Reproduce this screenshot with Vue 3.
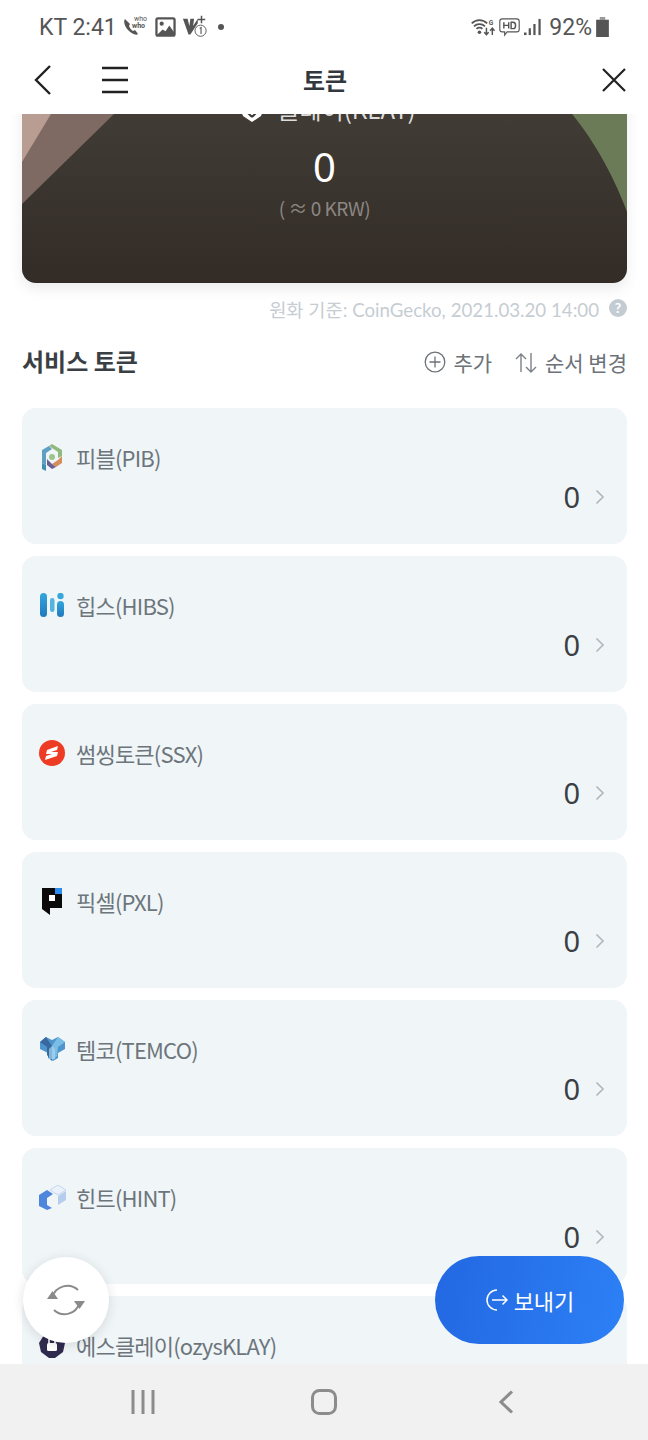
<template>
  <div class="screen">
    <div class="status">
      <div class="status-left">
        <span class="status-text">KT 2:41</span>
        <svg class="ic-who" width="26" height="24" viewBox="0 0 26 24">
          <path d="M2 4c-2 2 0 8 3 11s8 6 10 4l-3-4-2 1c-2-1-3-3-4-5l1-2z" fill="#555" />
          <text x="11" y="6" class="tiny">who</text>
          <text x="9" y="13" class="tiny bold">who</text>
        </svg>
        <svg width="21" height="20" viewBox="0 0 22 21">
          <rect x="1.500" y="1.500" width="19" height="18" rx="1.500" fill="none" stroke="#555" stroke-width="2.400" />
          <circle cx="7" cy="7" r="2.200" fill="#555" />
          <path d="M2 19l6-6 3 2 4-6 5 7v3z" fill="#555" />
        </svg>
        <svg width="26" height="26" viewBox="0 0 28 26">
          <path d="M1 4h5l2 8 1-8h4l-1 8 5-8v5l-8 12H7z" fill="#555" />
          <path d="M21 1v8M17 5h8" stroke="#555" stroke-width="1.600" />
          <circle cx="20" cy="17" r="6" fill="#fff" stroke="#555" stroke-width="1" />
          <path d="M19 14.500l1.500-1v7" fill="none" stroke="#555" stroke-width="1.200" />
        </svg>
        <span class="dot"></span>
      </div>
      <div class="status-right">
        <svg width="25" height="20" viewBox="0 0 34 26">
          <path d="M1 8c6-6 15-6 21 0M4 12c4-4 11-4 15 0M7.500 15.500c2-2 6-2 8 0" fill="none" stroke="#555" stroke-width="2.400" />
          <circle cx="11.500" cy="20" r="2.400" fill="#555" />
          <text x="24" y="10" class="tiny bold big">G</text>
          <path d="M21 14v9M18 20l3 3.500 3-3.500M29 24v-9M26 18l3-3.500 3 3.500" fill="none" stroke="#555" stroke-width="2" />
        </svg>
        <svg class="ic-hd" width="21" height="20" viewBox="0 0 26 24">
          <path d="M4 2h18a3 3 0 0 1 3 3v10a3 3 0 0 1-3 3H10l-3 4v-4H4a3 3 0 0 1-3-3V5a3 3 0 0 1 3-3z" fill="none" stroke="#555" stroke-width="1.400" />
          <path d="M6 6v8M12 6v8M6 10h6M15 6v8h2.500c4 0 4-8 0-8z" fill="none" stroke="#555" stroke-width="1.800" />
        </svg>
        <svg class="ic-signal" width="17" height="18" viewBox="0 0 20 21">
          <rect x="0" y="17" width="3" height="3" fill="#555" />
          <rect x="5.500" y="12" width="2.600" height="8" fill="#555" />
          <rect x="11" y="7" width="2.600" height="13" fill="#555" />
          <rect x="17" y="1" width="2.600" height="19" fill="#555" />
        </svg>
        <span class="status-text pct">92%</span>
        <svg width="13" height="20" viewBox="0 0 14 22">
          <rect x="4" y="0" width="6" height="3" fill="#999" />
          <rect x="0" y="3" width="14" height="19" fill="#555" />
        </svg>
      </div>
    </div>

    <header class="topbar">
      <div class="tb-left">
        <svg width="20" height="32" viewBox="0 0 20 32">
          <path d="M17 2L3 16l14 14" fill="none" stroke="#222" stroke-width="2.400" />
        </svg>
        <svg width="28" height="28" viewBox="0 0 28 28">
          <path d="M1 2h26M1 14h26M1 26h26" stroke="#222" stroke-width="2.400" />
        </svg>
      </div>
      <h1 class="title">토큰</h1>
      <div class="tb-right">
        <svg width="26" height="26" viewBox="0 0 26 26">
          <path d="M2 2l22 22M24 2L2 24" stroke="#222" stroke-width="2.200" />
        </svg>
      </div>
    </header>

    <main class="content">
      <section class="klay-card">
        <svg class="klay-bg" width="605" height="229" viewBox="0 0 605 229">
          <polygon points="0,0 160,0 92,60 0,150" fill="#7e6a62" />
          <polygon points="0,0 40,0 29,60 0,108" fill="#b99d93" />
          <path d="M550 60C575 90 595 130 605 158V60z" fill="#6b7a57" />
        </svg>
        <div class="klay-name">
          <svg class="klay-logo" width="26" height="24" viewBox="0 0 26 24">
            <path d="M13 0l13 8-4 10-9 6-9-6L0 8z" fill="#fff" />
            <path d="M8 0h10l-5 16z" fill="#3f3933" />
            <path d="M13 19L5 11M13 19l8-8" stroke="#3f3933" stroke-width="2" />
          </svg>
          <span>클레이(KLAY)</span>
        </div>
        <div class="klay-amount">0</div>
        <div class="klay-krw">( ≈ 0 KRW)</div>
      </section>

      <div class="rate">
        <span>원화 기준: CoinGecko, 2021.03.20 14:00</span>
        <span class="rate-help">?</span>
      </div>

      <div class="section-head">
        <h2>서비스 토큰</h2>
        <div class="actions">
          <span class="action">
            <svg width="22" height="22" viewBox="0 0 22 22">
              <circle cx="11" cy="11" r="9.800" fill="none" stroke="#6c7278" stroke-width="1.300" />
              <path d="M11 5.500v11M5.500 11h11" stroke="#6c7278" stroke-width="1.300" />
            </svg>
            추가
          </span>
          <span class="action">
            <svg width="24" height="24" viewBox="0 0 24 24">
              <path d="M7 22V4M2 9l5-5 5 5M17 3v19M12 17l5 5 5-5" fill="none" stroke="#7b8186" stroke-width="1.400" />
            </svg>
            순서 변경
          </span>
        </div>
      </div>

      <ul class="token-list">
        <li v-for="t in tokens" :key="t.id" class="token">
          <div class="token-name">
            <span class="token-icon">
              <svg v-if="t.id === 'pib'" width="22" height="27" viewBox="0 0 22 27">
                <path d="M11 0l10 6v6l-4 2V8l-6-4-3-2z" fill="#8fb97d" />
                <path d="M8 2L1 6v13l4 2V9l6-4z" fill="#5f9fc4" />
                <path d="M21 12v7l-6 4-4-3 6-4z" fill="#d58d5e" />
                <path d="M1 19l4 2v6l-4-2z" fill="#3f8fb5" />
                <path d="M6 15l5 5 4 3-4 2-5-4z" fill="#6a5f92" />
                <circle cx="11" cy="13" r="3" fill="#9cc48b" />
              </svg>
              <svg v-else-if="t.id === 'hibs'" width="24" height="24" viewBox="0 0 24 24">
                <defs>
                  <linearGradient id="hibsg" x1="0" y1="0" x2="0" y2="1">
                    <stop offset="0" stop-color="#35a7dd" />
                    <stop offset="1" stop-color="#1f78bd" />
                  </linearGradient>
                </defs>
                <rect x="0" y="0" width="7" height="24" rx="3.500" fill="url(#hibsg)" />
                <rect x="10" y="5" width="4.500" height="14" rx="2.200" fill="#56b3df" />
                <circle cx="20.500" cy="3" r="3.200" fill="#35a7dd" />
                <rect x="17" y="8" width="7" height="16" rx="3.500" fill="url(#hibsg)" />
              </svg>
              <svg v-else-if="t.id === 'ssx'" width="26" height="26" viewBox="0 0 26 26">
                <circle cx="13" cy="13" r="13" fill="#ee3b24" />
                <path d="M8 10l11-4-1 4-6 2 7 0-1 4-12 4 1-4 6-2-6 0z" fill="#fff" />
              </svg>
              <svg v-else-if="t.id === 'pxl'" width="20" height="27" viewBox="0 0 20 27">
                <path d="M0 0h20v20H8v7l-8-6z" fill="#0a0a0a" />
                <rect x="13" y="0" width="7" height="6" fill="#2b8cf0" />
                <rect x="7" y="7" width="6" height="6" fill="#fff" />
              </svg>
              <svg v-else-if="t.id === 'temco'" width="25" height="24" viewBox="0 0 25 24">
                <path d="M0 5l6-5 6 3 6-3 7 5v7l-7 4v5l-5 3-5-3v-5l-8-4z" fill="#4f95cc" />
                <path d="M0 5l7 5v8l5 6V9L6 0z" fill="#37689f" />
                <path d="M12 9l6-9 7 5-7 5-1 9-5 5z" fill="#79bde6" />
                <path d="M9 12l3-3 3 3v10h-6z" fill="#a5d4ee" opacity="0.7" />
              </svg>
              <svg v-else-if="t.id === 'hint'" width="27" height="25" viewBox="0 0 27 25">
                <path d="M0 10l8-5 6 4-6 4v7l5 3-5 2-8-4z" fill="#4f86dd" />
                <path d="M11 5l8-5 8 5-8 5z" fill="#eaf2fb" stroke="#c4d6ee" stroke-width="1" />
                <path d="M27 6v9l-8 5v-9z" fill="#b6cdee" />
              </svg>
              <svg v-else width="26" height="26" viewBox="0 0 26 26">
                <path d="M13 0l8 3 5 8-2 9-8 6h-6l-8-6-2-9 5-8z" fill="#2f2a4f" />
                <rect x="8" y="11" width="10" height="8" rx="1.500" fill="#fff" />
                <path d="M10 11V8a3 3 0 0 1 6 0v3" fill="none" stroke="#fff" stroke-width="1.600" />
              </svg>
            </span>
            <span>{{ t.name }}</span>
          </div>
          <div class="token-value">
            <span class="amount">{{ t.amount }}</span>
            <svg width="10" height="16" viewBox="0 0 10 16">
              <path d="M1.500 1.500L8 8l-6.500 6.500" fill="none" stroke="#b3b8bc" stroke-width="1.700" />
            </svg>
          </div>
        </li>
      </ul>

      <button class="fab-refresh" type="button">
        <svg width="38" height="34" viewBox="0 0 38 34">
          <path d="M5.500 14A15.500 15.500 0 0 1 31 7M32.500 20A15.500 15.500 0 0 1 7 27" fill="none" stroke="#8a8a8a" stroke-width="2" />
          <path d="M0 16L5.500 8l5.500 8zM27 18h11l-5.500 8z" fill="#8a8a8a" />
        </svg>
      </button>
      <button class="fab-send" type="button">
        <svg width="23" height="24" viewBox="0 0 23 24">
          <path d="M12 2A10 10 0 1 0 12 22" fill="none" stroke="#fff" stroke-width="1.500" />
          <path d="M7 12h15M17.500 7.500L22 12l-4.500 4.500" fill="none" stroke="#fff" stroke-width="1.500" />
        </svg>
        보내기
      </button>
    </main>

    <nav class="softkeys">
      <svg width="24" height="24" viewBox="0 0 24 24">
        <path d="M2 0v24M12 0v24M22 0v24" stroke="#8c8c8c" stroke-width="3" />
      </svg>
      <svg width="26" height="26" viewBox="0 0 26 26">
        <rect x="1.500" y="1.500" width="23" height="23" rx="7" fill="none" stroke="#8c8c8c" stroke-width="3" />
      </svg>
      <svg width="16" height="24" viewBox="0 0 16 24">
        <path d="M14 1.500L3 12l11 10.500" fill="none" stroke="#8c8c8c" stroke-width="3" />
      </svg>
    </nav>
  </div>
</template>

<script setup>
const tokens = [
  { id: 'pib', name: '피블(PIB)', amount: 0 },
  { id: 'hibs', name: '힙스(HIBS)', amount: 0 },
  { id: 'ssx', name: '썸씽토큰(SSX)', amount: 0 },
  { id: 'pxl', name: '픽셀(PXL)', amount: 0 },
  { id: 'temco', name: '템코(TEMCO)', amount: 0 },
  { id: 'hint', name: '힌트(HINT)', amount: 0 },
  { id: 'ozys', name: '에스클레이(ozysKLAY)', amount: 0 }
]
</script>

<style>
html,
body {
  margin: 0;
  background: #fff;
}
</style>

<style scoped>
.screen {
  width: 648px;
  height: 1440px;
  display: flex;
  flex-direction: column;
  overflow: hidden;
  background: #fff;
  font-family: "Noto Sans CJK KR", "Noto Sans", sans-serif;
}
.status {
  height: 54px;
  flex: none;
  display: flex;
  justify-content: space-between;
  align-items: center;
  padding: 0 39px;
  box-sizing: border-box;
  background: #fff;
}
.status-left,
.status-right {
  display: flex;
  align-items: center;
}
.status-left {
  gap: 6px;
}
.status-text {
  font-family: Roboto, sans-serif;
  font-size: 23px;
  color: #555;
}
.ic-hd {
  margin-left: 3px;
}
.ic-signal {
  margin-left: 4px;
}
.pct {
  margin-left: 8px;
  margin-right: 4px;
}
.tiny {
  font-family: Roboto, sans-serif;
  font-size: 7px;
  fill: #555;
}
.big {
  font-size: 9px;
}
.bold {
  font-weight: 700;
}
.dot {
  width: 6px;
  height: 6px;
  border-radius: 50%;
  background: #555;
  margin-left: 4px;
}
.topbar {
  height: 60px;
  flex: none;
  box-sizing: border-box;
  position: relative;
  z-index: 2;
  background: #fff;
  padding: 0 21px 8px;
  display: grid;
  grid-template-columns: 1fr auto 1fr;
  align-items: center;
}
.tb-left {
  display: flex;
  align-items: center;
  gap: 48px;
  padding-left: 12px;
}
.tb-right {
  display: flex;
  justify-content: flex-end;
}
.title {
  margin: 0 0 0 2px;
  font-size: 24px;
  line-height: 34px;
  font-weight: 700;
  color: #33383d;
}
.content {
  flex: 1;
  position: relative;
  overflow: hidden;
  padding: 0 21px 0 22px;
}
.klay-card {
  position: relative;
  height: 229px;
  margin-top: -60px;
  border-radius: 14px;
  overflow: hidden;
  background: linear-gradient(#46413b, #332c26);
  box-shadow: 0 6px 14px rgba(0, 0, 0, 0.08);
  display: flex;
  flex-direction: column;
  align-items: center;
  color: #fff;
}
.klay-bg {
  position: absolute;
  left: 0;
  top: 0;
}
.klay-name,
.klay-amount,
.klay-krw {
  position: relative;
}
.klay-name {
  margin-top: 37px;
  margin-left: 6px;
  height: 34px;
  display: flex;
  align-items: center;
  gap: 12px;
  font-size: 24px;
  color: #ddd;
}
.klay-logo {
  margin-top: 4px;
}
.klay-amount {
  margin-top: 19px;
  height: 46px;
  line-height: 46px;
  font-size: 40px;
  font-family: "Noto Sans", sans-serif;
}
.klay-krw {
  margin-top: 4px;
  font-size: 19px;
  letter-spacing: -0.5px;
  line-height: 28px;
  color: #8c8782;
}
.rate {
  margin-top: 11px;
  height: 28px;
  display: flex;
  justify-content: flex-end;
  align-items: center;
  gap: 10px;
  font-family: Lato, "Noto Sans CJK KR", sans-serif;
  font-size: 18.700px;
  color: #c6cdd2;
}
.rate-help {
  width: 18px;
  height: 18px;
  border-radius: 50%;
  background: #c3ccd2;
  color: #fff;
  font-size: 14px;
  font-weight: 700;
  line-height: 18px;
  text-align: center;
}
.section-head {
  margin-top: 21px;
  height: 36px;
  display: flex;
  justify-content: space-between;
  align-items: center;
}
.section-head h2 {
  margin: 0 0 2px;
  font-size: 24px;
  font-weight: 700;
  color: #3a3f44;
}
.actions {
  display: flex;
  gap: 22px;
  margin-top: 2px;
}
.action {
  display: flex;
  align-items: center;
  gap: 7px;
  font-size: 21px;
  color: #6c7278;
}
.token-list {
  list-style: none;
  margin: 29px 0 0;
  padding: 0;
  display: flex;
  flex-direction: column;
  gap: 12px;
}
.token {
  height: 136px;
  box-sizing: border-box;
  padding: 32px 22px 0 16px;
  border-radius: 14px;
  background: #f0f5f8;
}
.token-name {
  height: 34px;
  display: flex;
  align-items: center;
  gap: 10px;
  font-size: 22px;
  letter-spacing: -0.8px;
  color: #6d757c;
}
.token-icon {
  width: 28px;
  height: 34px;
  display: flex;
  align-items: center;
  justify-content: center;
}
.token-value {
  margin-top: 4px;
  display: flex;
  justify-content: flex-end;
  align-items: center;
  gap: 15px;
}
.amount {
  font-family: "Noto Sans", sans-serif;
  font-size: 29px;
  line-height: 38px;
  color: #3a3f44;
}
.fab-refresh {
  position: absolute;
  left: 23px;
  top: 1143px;
  width: 86px;
  height: 86px;
  border: 0;
  padding: 0;
  border-radius: 50%;
  background: #fff;
  box-shadow: 0 2px 12px rgba(0, 0, 0, 0.12);
  display: flex;
  align-items: center;
  justify-content: center;
}
.fab-send {
  position: absolute;
  left: 435px;
  top: 1142px;
  width: 189px;
  height: 88px;
  border: 0;
  padding: 0;
  border-radius: 44px;
  background: linear-gradient(100deg, #2268e2, #2d80f6);
  display: flex;
  align-items: center;
  justify-content: center;
  gap: 6px;
  font-family: inherit;
  font-size: 22px;
  color: #fff;
}
.softkeys {
  height: 76px;
  flex: none;
  position: relative;
  z-index: 2;
  background: #f1f1f1;
  display: grid;
  grid-template-columns: 1fr 1fr 1fr;
  justify-items: center;
  align-items: center;
}
.softkeys svg:nth-child(1) {
  margin-left: 70px;
}
.softkeys svg:nth-child(3) {
  margin-right: 68px;
}
</style>
